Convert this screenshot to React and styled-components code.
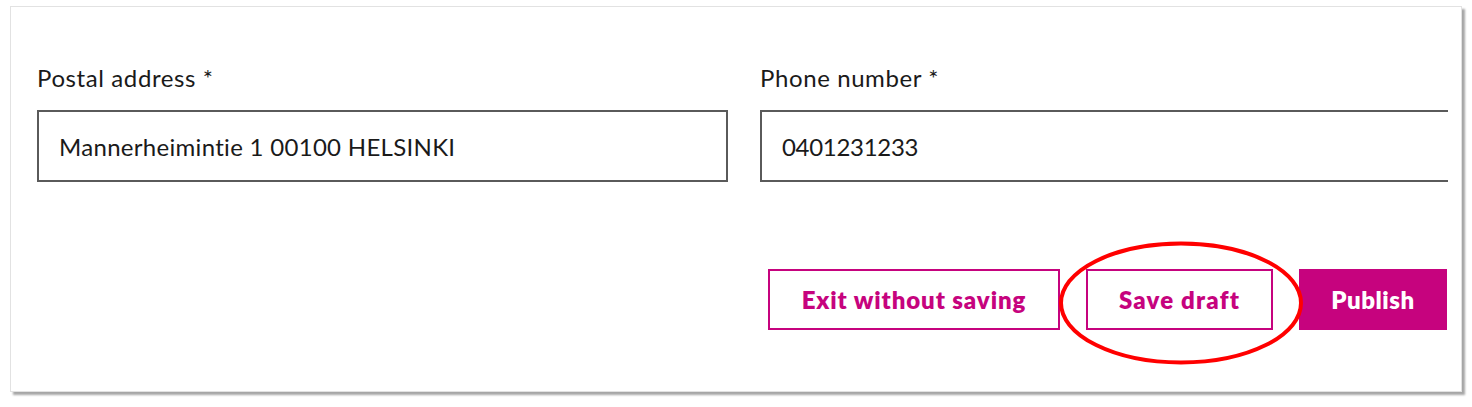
import React from "react";
import styled, { createGlobalStyle } from "styled-components";

const Global = createGlobalStyle`
  html, body { margin: 0; padding: 0; background: #fff; }
  body { font-family: Lato, "Open Sans", Arial, sans-serif; }
`;

const Page = styled.div`
  padding: 6px 0 0 10px;
  width: 1472px;
  height: 407px;
  box-sizing: border-box;
`;

const Frame = styled.div`
  position: relative;
  width: 1452px;
  height: 386px;
  box-sizing: border-box;
  border: 1px solid #e2e2e2;
  background: #fff;
  box-shadow: 3px 3px 2px rgba(0, 0, 0, 0.35);
`;

const Viewport = styled.div`
  width: 1437px;
  height: 100%;
  overflow: hidden;
`;

const Form = styled.div`
  padding: 56px 0 0 26px;
  width: 1450px;
  box-sizing: border-box;
`;

const Fields = styled.div`
  display: grid;
  grid-template-columns: 691px 691px;
  column-gap: 32px;
`;

const Field = styled.div`
  display: flex;
  flex-direction: column;
  gap: 17px;
`;

const Label = styled.label`
  font-size: 24px;
  line-height: 30px;
  color: #1a1a1a;
  letter-spacing: 0.6px;
`;

const Input = styled.div`
  height: 72px;
  box-sizing: border-box;
  border: 2px solid #5a5a5a;
  display: flex;
  align-items: center;
  padding: 0 20px;
  font-size: 24px;
  color: #1a1a1a;
  letter-spacing: ${(p) => (p.$narrow ? "-0.3px" : "0.3px")};
`;

const Actions = styled.div`
  display: flex;
  justify-content: flex-end;
  gap: 26px;
  margin-top: 87px;
  padding-right: 14px;
`;

const Button = styled.button`
  height: 61px;
  width: ${(p) => p.$w}px;
  box-sizing: border-box;
  padding: 0;
  border: 2px solid #c6037e;
  background: ${(p) => (p.$primary ? "#c6037e" : "#fff")};
  color: ${(p) => (p.$primary ? "#fff" : "#c6037e")};
  font-family: Lato, "Open Sans", Arial, sans-serif;
  font-weight: 800;
  font-size: 24px;
  letter-spacing: ${(p) => p.$ls}px;
  cursor: pointer;
`;

const Annotation = styled.svg`
  position: absolute;
  left: 1047px;
  top: 234px;
  overflow: visible;
  pointer-events: none;
`;

export default function App() {
  return (
    <>
      <Global />
      <Page>
        <Frame>
          <Viewport>
            <Form>
              <Fields>
                <Field>
                  <Label>Postal address *</Label>
                  <Input>Mannerheimintie 1 00100 HELSINKI</Input>
                </Field>
                <Field>
                  <Label>Phone number *</Label>
                  <Input $narrow>0401231233</Input>
                </Field>
              </Fields>
              <Actions>
                <Button $w={292} $ls={0.9}>Exit without saving</Button>
                <Button $w={187} $ls={1.2}>Save draft</Button>
                <Button $primary $w={148} $ls={0.5}>Publish</Button>
              </Actions>
            </Form>
          </Viewport>
          <Annotation width="246" height="126" viewBox="0 0 246 126">
            <ellipse cx="123" cy="62" rx="120" ry="59.5" fill="none" stroke="#ff0000" strokeWidth="4" />
          </Annotation>
        </Frame>
      </Page>
    </>
  );
}
